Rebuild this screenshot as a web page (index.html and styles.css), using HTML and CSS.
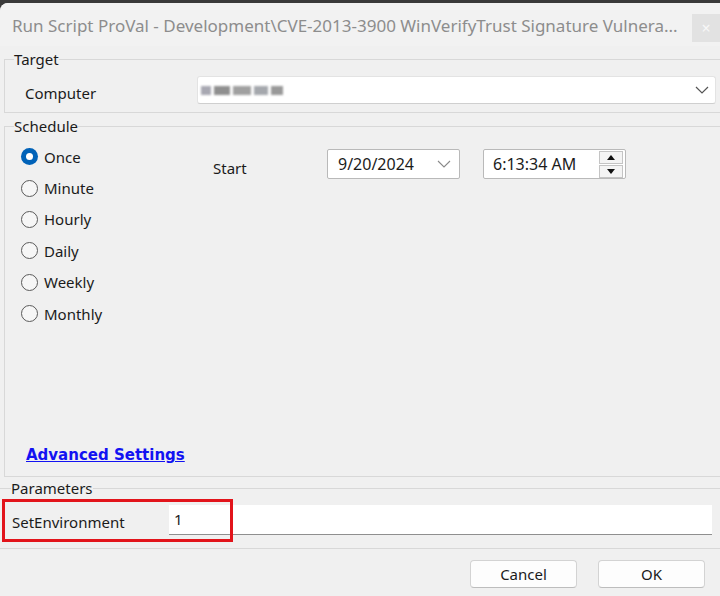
FILE: index.html
```html
<!DOCTYPE html>
<html>
<head>
<meta charset="utf-8">
<link rel="stylesheet" href="styles.css">
</head>
<body>
<div class="window">
  <div class="titlebar">
    <div class="title">Run Script ProVal - Development\CVE-2013-3900 WinVerifyTrust Signature Vulnera...</div>
    <div class="close">×</div>
  </div>

  <fieldset class="group target">
    <legend>Target</legend>
    <div class="row computer-row">
      <span class="field-label">Computer</span>
      <div class="combo">
        <div class="blurred">
          <span class="b b1"></span><span class="b b2"></span><span class="b b3"></span><span class="b b4"></span><span class="b b5"></span>
        </div>
        <svg class="chev" width="14" height="8" viewBox="0 0 14 8"><path d="M1 1 L7 7 L13 1" fill="none" stroke="#555" stroke-width="1.2"/></svg>
      </div>
    </div>
  </fieldset>

  <fieldset class="group schedule">
    <legend>Schedule</legend>
    <div class="sched-body">
      <div class="sched-top">
        <div class="radios">
          <label class="radio"><span class="dot checked"></span>Once</label>
          <label class="radio"><span class="dot"></span>Minute</label>
          <label class="radio"><span class="dot"></span>Hourly</label>
          <label class="radio"><span class="dot"></span>Daily</label>
          <label class="radio"><span class="dot"></span>Weekly</label>
          <label class="radio"><span class="dot"></span>Monthly</label>
        </div>
        <div class="start">
          <span class="start-label">Start</span>
          <div class="datebox">
            <span>9/20/2024</span>
            <svg width="14" height="8" viewBox="0 0 14 8"><path d="M1 1 L7 7 L13 1" fill="none" stroke="#8a8a8a" stroke-width="1.1"/></svg>
          </div>
          <div class="timebox">
            <span>6:13:34 AM</span>
            <div class="spin">
              <div class="spin-btn"><svg width="8" height="5" viewBox="0 0 8 5"><path d="M0 5 L4 0 L8 5 Z" fill="#111"/></svg></div>
              <div class="spin-btn"><svg width="8" height="5" viewBox="0 0 8 5"><path d="M0 0 L4 5 L8 0 Z" fill="#111"/></svg></div>
            </div>
          </div>
        </div>
      </div>
      <a class="adv" href="#">Advanced Settings</a>
    </div>
  </fieldset>

  <fieldset class="group params">
    <legend>Parameters</legend>
    <div class="param-row">
      <span class="param-label">SetEnvironment</span>
      <div class="param-input">1</div>
      <div class="highlight"></div>
    </div>
  </fieldset>

  <div class="buttons">
    <button class="btn">Cancel</button>
    <button class="btn">OK</button>
  </div>
</div>
</body>
</html>
```

FILE: styles.css
```css
html, body {
  margin: 0;
  padding: 0;
}
body {
  width: 720px;
  height: 596px;
  overflow: hidden;
  background: #3a3a3a;
  font-family: "Noto Sans", "Open Sans", sans-serif;
  font-size: 15px;
  color: #1b1b1b;
}
.window {
  margin-top: 3px;
  height: 593px;
  background: #f0f0f0;
  border-top-left-radius: 8px;
  overflow: hidden;
}
.titlebar {
  height: 43px;
  display: flex;
  align-items: flex-start;
  background: #f2f2f2;
}
.title {
  flex: 1;
  padding-left: 12px;
  padding-top: 12px;
  font-size: 17px;
  line-height: 22px;
  color: #8d8d8d;
  white-space: nowrap;
  overflow: hidden;
}
.close {
  margin-top: 11px;
  width: 28px;
  height: 28px;
  background: #e2e2e2;
  color: #f7f7f7;
  font-size: 16px;
  line-height: 28px;
  text-align: center;
}

.group {
  margin: 0 -20px 0 4px;
  border: 1px solid #d8d8d8;
  padding: 0 8px;
  min-width: 0;
}
.group legend {
  padding: 0;
  font-size: 15px;
  line-height: 20px;
  margin-left: 1px;
}
.target {
  margin-top: 3px;
  padding-top: 7px;
  padding-bottom: 8px;
}
.row {
  display: flex;
  align-items: center;
}
.computer-row {
  height: 28px;
}
.field-label {
  box-sizing: border-box;
  width: 184px;
  padding-left: 12px;
  padding-top: 6px;
}
.combo {
  width: 513px;
  height: 26px;
  background: #fff;
  border: 1px solid #e3e3e3;
  border-bottom-color: #cfcfcf;
  border-radius: 3px;
  display: flex;
  align-items: center;
  justify-content: space-between;
  padding-right: 4px;
  box-sizing: content-box;
}
.blurred {
  display: flex;
  align-items: center;
  gap: 3px;
  padding-left: 3px;
  filter: blur(1.2px);
}
.b {
  display: inline-block;
  height: 9px;
  background: #9a9a9c;
}
.b1 { width: 10px; background: #a8a8b2; }
.b2 { width: 16px; background: #8f8f8f; }
.b3 { width: 18px; background: #a0a0a0; }
.b4 { width: 14px; background: #a5a8ad; }
.b5 { width: 12px; background: #999; }
.chev { margin-right: 2px; }

.schedule {
  margin-top: 3px;
}
.sched-body {
  height: 340px;
  display: flex;
  flex-direction: column;
}
.sched-top {
  display: flex;
  padding-top: 5px;
}
.radios {
  display: flex;
  flex-direction: column;
  padding-left: 8px;
  width: 192px;
}
.radio {
  height: 31.4px;
  display: flex;
  align-items: center;
  gap: 6px;
}
.dot {
  width: 17px;
  height: 17px;
  box-sizing: border-box;
  border-radius: 50%;
  border: 1px solid #5a5a5a;
  background: #f6f6f6;
  position: relative;
}
.dot.checked {
  border: none;
  background: #0062b8;
}
.dot.checked::after {
  content: "";
  position: absolute;
  left: 5px;
  top: 5px;
  width: 7px;
  height: 7px;
  border-radius: 50%;
  background: #fff;
}
.start {
  display: flex;
  align-items: flex-start;
  padding-top: 8px;
}
.start-label {
  width: 114px;
  padding-top: 9px;
}
.datebox, .timebox {
  height: 28px;
  background: #fff;
  border: 1px solid #b9b9b9;
  border-radius: 2px;
  display: flex;
  align-items: center;
  justify-content: space-between;
  box-sizing: content-box;
  font-size: 16px;
}
.datebox {
  width: 131px;
  margin-right: 23px;
}
.datebox span { padding-left: 10px; }
.datebox svg { margin-right: 8px; }
.timebox {
  width: 141px;
}
.timebox span { padding-left: 9px; }
.spin {
  display: flex;
  flex-direction: column;
  gap: 1px;
  margin-right: 2px;
}
.spin-btn {
  width: 22px;
  height: 11px;
  border: 1px solid #c4c4c4;
  background: #f4f4f4;
  display: flex;
  align-items: center;
  justify-content: center;
}
.adv {
  margin-top: auto;
  margin-bottom: 12px;
  margin-left: 13px;
  align-self: flex-start;
  font-family: "DejaVu Sans", sans-serif;
  font-weight: bold;
  font-size: 15px;
  color: #1212f2;
  text-decoration: underline;
}

.params {
  margin: 1px -20px 0 -2px;
  border-left: none;
  border-right: none;
  padding: 7px 8px 13px 8px;
}
.params legend {
  margin-left: 5px;
}
.param-row {
  position: relative;
  display: flex;
  align-items: center;
  height: 30px;
}
.param-label {
  width: 157px;
  padding-left: 6px;
  padding-top: 4px;
}
.param-input {
  width: 538px;
  height: 29px;
  background: #fff;
  border-bottom: 1px solid #8f8f8f;
  padding-left: 5px;
  line-height: 28px;
  box-sizing: content-box;
}
.highlight {
  position: absolute;
  left: -4px;
  top: -6px;
  width: 225px;
  height: 37px;
  border: 3px solid #e2141b;
  pointer-events: none;
}

.buttons {
  display: flex;
  justify-content: flex-end;
  gap: 21px;
  padding-right: 15px;
  margin-top: 11px;
}
.btn {
  width: 107px;
  height: 28px;
  background: #fdfdfd;
  border: 1px solid #d3d3d3;
  border-bottom-color: #bdbdbd;
  border-radius: 4px;
  font-family: "Noto Sans", "Open Sans", sans-serif;
  font-size: 15px;
  color: #1b1b1b;
  padding: 0;
}
```
